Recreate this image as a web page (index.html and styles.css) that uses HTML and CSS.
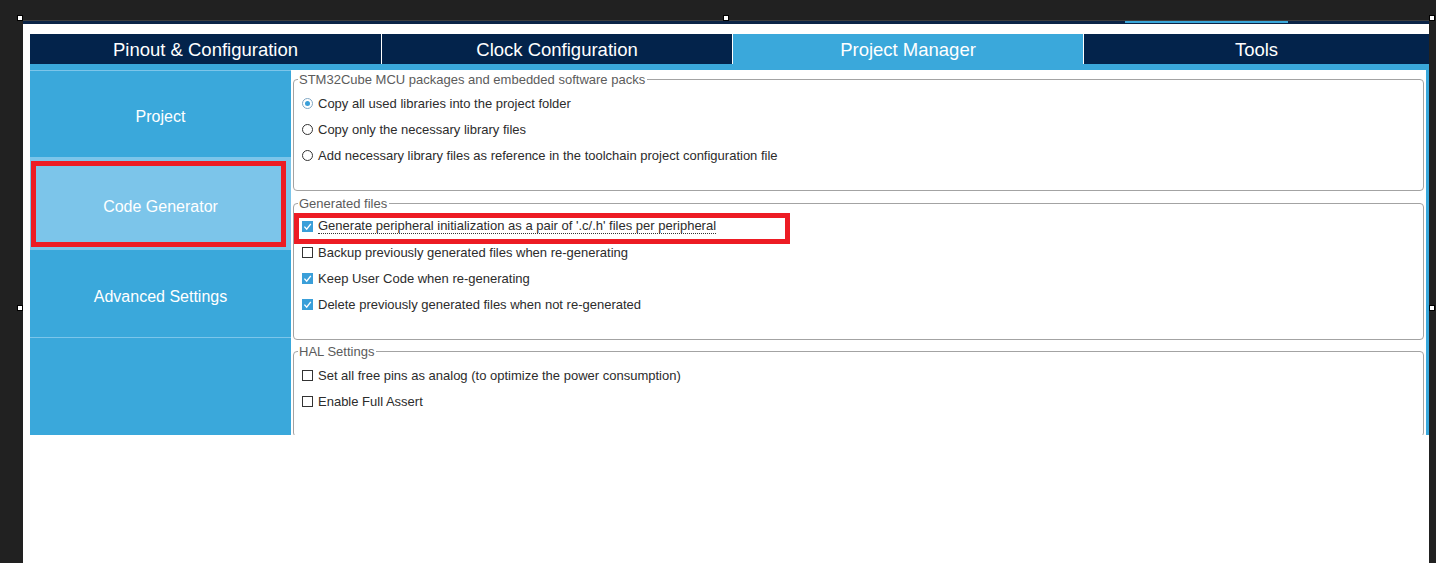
FILE: index.html
```html
<!DOCTYPE html>
<html lang="en">
<head>
<meta charset="utf-8">
<title>Project Manager</title>
<link rel="stylesheet" href="styles.css">
</head>
<body>
<div class="handle h-tl"></div>
<div class="handle h-tc"></div>
<div class="handle h-tr"></div>
<div class="handle h-ml"></div>
<div class="handle h-mr"></div>
<div class="frame">
  <div class="topstrip"><span class="topseg"></span></div>
  <div class="app">
    <nav class="tabs">
      <div class="tab">Pinout &amp; Configuration</div>
      <div class="tab">Clock Configuration</div>
      <div class="tab active">Project Manager</div>
      <div class="tab">Tools</div>
    </nav>
    <div class="main">
      <aside class="side">
        <div class="side-item item-project">Project</div>
        <div class="side-item item-code">Code Generator<span class="mark-side"></span></div>
        <div class="side-item item-adv">Advanced Settings</div>
        <div class="side-item item-empty"></div>
      </aside>
      <section class="content">
        <fieldset class="fs fs-packs">
          <legend>STM32Cube MCU packages and embedded software packs</legend>
          <label class="row"><span class="radio on"></span>Copy all used libraries into the project folder</label>
          <label class="row"><span class="radio"></span>Copy only the necessary library files</label>
          <label class="row"><span class="radio"></span>Add necessary library files as reference in the toolchain project configuration file</label>
        </fieldset>
        <fieldset class="fs fs-gen">
          <legend>Generated files</legend>
          <label class="row"><span class="box on"><svg viewBox="0 0 11 11" width="11" height="11"><polyline points="2.4,5.6 4.7,8.1 8.8,2.9" fill="none" stroke="#fff" stroke-width="1.4"/></svg></span><span class="focus-text">Generate peripheral initialization as a pair of '.c/.h' files per peripheral</span><span class="mark-row"></span></label>
          <label class="row"><span class="box"></span>Backup previously generated files when re-generating</label>
          <label class="row"><span class="box on"><svg viewBox="0 0 11 11" width="11" height="11"><polyline points="2.4,5.6 4.7,8.1 8.8,2.9" fill="none" stroke="#fff" stroke-width="1.4"/></svg></span>Keep User Code when re-generating</label>
          <label class="row"><span class="box on"><svg viewBox="0 0 11 11" width="11" height="11"><polyline points="2.4,5.6 4.7,8.1 8.8,2.9" fill="none" stroke="#fff" stroke-width="1.4"/></svg></span>Delete previously generated files when not re-generated</label>
        </fieldset>
        <fieldset class="fs fs-hal">
          <legend>HAL Settings</legend>
          <label class="row"><span class="box"></span>Set all free pins as analog (to optimize the power consumption)</label>
          <label class="row"><span class="box"></span>Enable Full Assert</label>
        </fieldset>
      </section>
    </div>
  </div>
</div>
</body>
</html>
```

FILE: styles.css
```css
* { box-sizing: border-box; }
html, body { margin: 0; padding: 0; }
body {
  background: #212121;
  width: 1436px;
  height: 563px;
  overflow: hidden;
  position: relative;
  font-family: "Liberation Sans", Arial, sans-serif;
}

.handle {
  position: absolute;
  width: 6px;
  height: 6px;
  background: #fff;
  border: 1px solid #000;
  z-index: 5;
}
.h-tl { left: 17px; top: 15px; }
.h-tc { left: 723px; top: 15px; }
.h-tr { left: 1429px; top: 15px; }
.h-ml { left: 17px; top: 305px; }
.h-mr { left: 1429px; top: 305px; }

.frame {
  margin: 20px 0 0 23px;
  width: 1406px;
  height: 543px;
  background: #fff;
  border-top: 1px solid #3d3d3d;
}
.topstrip {
  height: 3px;
  background: #0b2447;
  display: flex;
}
.topseg {
  margin-left: 1102px;
  width: 163px;
  height: 2px;
  background: #3aa8db;
}

.app { padding: 10px 0 0 7px; }

.tabs {
  display: grid;
  grid-template-columns: 351px 350px 350px 1fr;
  column-gap: 1px;
  background: #fff;
  height: 30px;
}
.tab {
  background: #03234b;
  color: #fff;
  font-size: 18.5px;
  display: flex;
  align-items: center;
  justify-content: center;
  padding-top: 2px;
}
.tab.active { background: #3aa8db; }

.main {
  display: flex;
  height: 371px;
  background: #3aa8db;
  padding: 6px 3px 0 0;
  overflow: hidden;
}

.side {
  width: 261px;
  flex: none;
  display: flex;
  flex-direction: column;
}
.side-item {
  border-top: 1px solid #7cc5ea;
  color: #fff;
  font-size: 16px;
  display: flex;
  align-items: center;
  justify-content: center;
  padding-top: 6px;
  position: relative;
}
.item-project { height: 87px; padding-top: 5px; }
.item-code { height: 92px; background: #7cc5ea; }
.item-adv { height: 88px; }
.item-empty { flex: 1; }
.mark-side {
  position: absolute;
  left: 1px;
  top: 3px;
  width: 255px;
  height: 86px;
  border: 5px solid #ed1c24;
}

.content {
  flex: 1;
  min-width: 0;
  background: #fff;
  padding: 2px 2px 0 2px;
  display: flex;
  flex-direction: column;
  overflow: hidden;
}

.fs {
  margin: 0;
  min-width: 0;
  flex: none;
  border: 1px solid #a3a3a3;
  border-radius: 4px;
  padding: 3px 0 22px 0;
}
.fs legend {
  font-size: 13px;
  line-height: 15px;
  color: #5b5b5b;
  margin-left: 4px;
  padding: 0 2px 0 1px;
}
.fs-gen { margin-top: 5px; padding-top: 2px; padding-bottom: 22px; }
.fs-hal { margin-top: 4px; }

.row {
  display: flex;
  align-items: center;
  height: 26px;
  padding-left: 8px;
  font-size: 13px;
  color: #2c2c2c;
  position: relative;
}
.box, .radio {
  width: 11px;
  height: 11px;
  flex: none;
  margin-right: 5px;
  border: 1px solid #333;
  background: #fff;
}
.box.on {
  border: none;
  background: #3a9fd9;
  display: block;
}
.box.on svg { display: block; }
.radio { border-radius: 50%; display: flex; align-items: center; justify-content: center; }
.radio.on { border-color: #7fa7c4; }
.radio.on::after {
  content: "";
  width: 5px;
  height: 5px;
  border-radius: 50%;
  background: #3a9fd9;
}
.focus-text { border-bottom: 1px dotted #333; }
.mark-row {
  position: absolute;
  left: 0;
  top: 0;
  width: 496px;
  height: 31px;
  border: 5px solid #ed1c24;
}
```
